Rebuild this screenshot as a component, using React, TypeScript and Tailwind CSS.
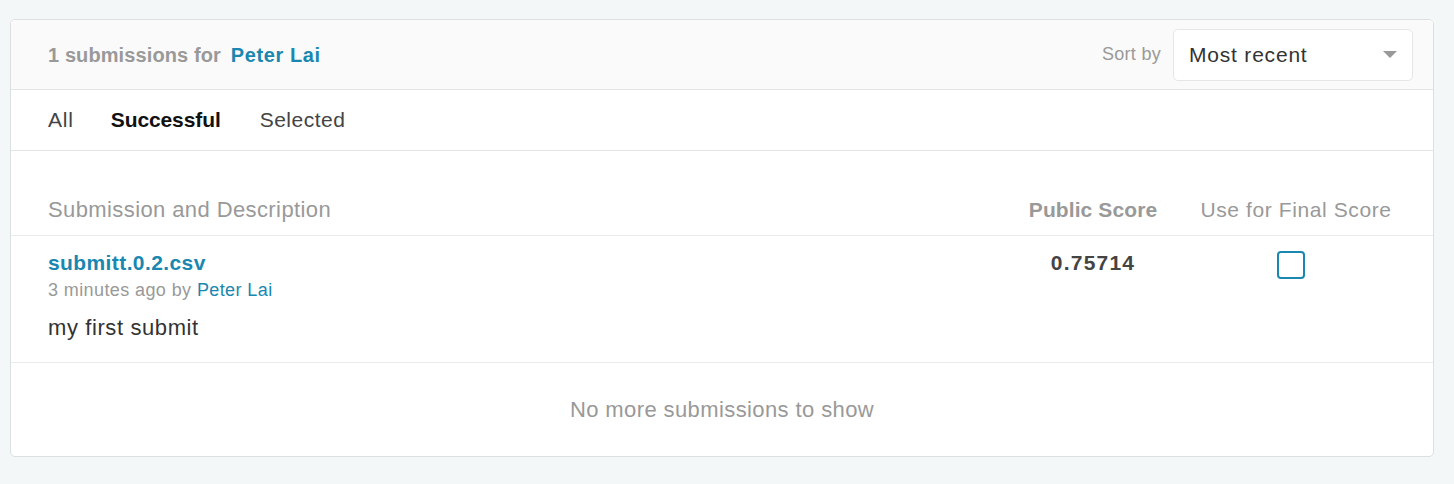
import React from "react";

const font = { fontFamily: '"Liberation Sans", Arial, sans-serif' };

export default function App() {
  return (
    <div className="min-h-[484px] w-[1454px] bg-[#f4f7f8] pt-[19px] pl-[10px]" style={font}>
      <div className="w-[1424px] overflow-hidden rounded-[5px] border border-[#dedfe0] bg-white">
        {/* header */}
        <div className="flex h-[70px] items-center justify-between border-b border-[#e3e4e5] bg-[#fafafa] pl-[37px] pr-[20px]">
          <div className="flex items-baseline gap-[10px] text-[20px] font-bold">
            <span className="text-[#999] tracking-[0.1px]">1 submissions for</span>
            <a className="text-[#1a87b0] tracking-[0.6px]">Peter Lai</a>
          </div>
          <div className="flex items-center gap-[12px]">
            <span className="text-[18px] text-[#999] tracking-[0.3px]">Sort by</span>
            <div className="flex h-[52px] w-[240px] items-center justify-between rounded-[5px] border border-[#e6e6e6] bg-white pl-[15px] pr-[15px]">
              <span className="text-[21px] text-[#333] tracking-[0.8px]">Most recent</span>
              <svg width="14" height="8" viewBox="0 0 14 8">
                <path d="M0 0 H14 L7 7 Z" fill="#999" />
              </svg>
            </div>
          </div>
        </div>

        {/* tabs */}
        <div className="flex h-[61px] items-center border-b border-[#e3e4e5] pl-[37px] text-[21px]">
          <span className="mr-[37px] text-[#444] tracking-[0.8px]">All</span>
          <span className="mr-[39px] font-bold text-[#111] tracking-[-0.1px]">Successful</span>
          <span className="text-[#444] tracking-[0.5px]">Selected</span>
        </div>

        {/* table head */}
        <div className="grid grid-cols-[1fr_170px_230px] items-baseline border-b border-[#eaebec] pt-[42px] pb-[9px] pl-[37px] pr-[22px]">
          <span className="text-[22px] tracking-[0.4px] text-[#999]">Submission and Description</span>
          <span className="pr-[6px] text-center text-[21px] font-bold tracking-[0.1px] text-[#999]">Public Score</span>
          <span className="text-center text-[21px] tracking-[0.6px] text-[#999]">Use for Final Score</span>
        </div>

        {/* row */}
        <div className="grid h-[127px] grid-cols-[1fr_170px_230px] border-b border-[#eaebec] pt-[14px] pl-[37px] pr-[22px]">
          <div className="flex flex-col">
            <a className="text-[21px] font-bold leading-[26px] tracking-[0.4px] text-[#1a87b0]">submitt.0.2.csv</a>
            <div className="mt-[1px] text-[18px] leading-[27px] tracking-[0.4px] text-[#999]">
              3 minutes ago by <a className="text-[#1a87b0]">Peter Lai</a>
            </div>
            <div className="mt-[11px] text-[22px] leading-[26px] tracking-[0.6px] text-[#333]">my first submit</div>
          </div>
          <div className="pr-[6px] text-center text-[21px] font-bold leading-[26px] tracking-[1.2px] text-[#444]">0.75714</div>
          <div className="flex justify-center pt-[1px] pr-[10px]">
            <div className="h-[28px] w-[28px] rounded-[4px] border-2 border-[#1a87b0] bg-white" />
          </div>
        </div>

        {/* footer */}
        <div className="flex h-[93px] items-center justify-center text-[22px] tracking-[0.4px] text-[#999]">
          No more submissions to show
        </div>
      </div>
    </div>
  );
}
